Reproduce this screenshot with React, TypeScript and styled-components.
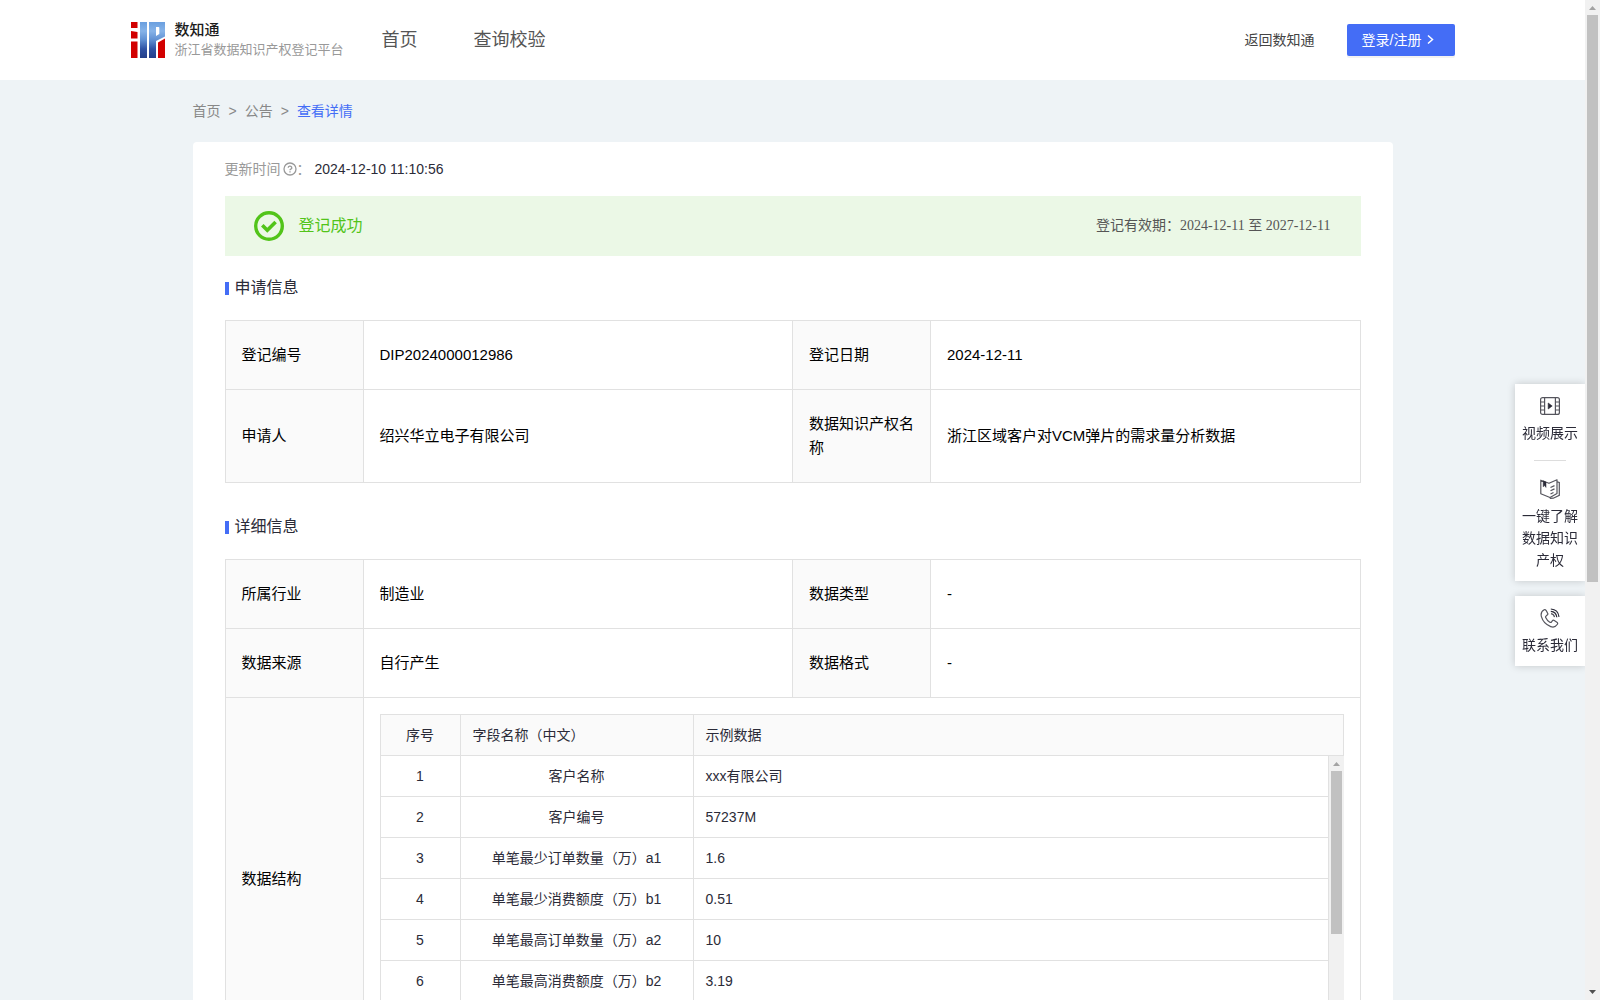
import React from "react";
import styled, { createGlobalStyle } from "styled-components";

const GlobalStyle = createGlobalStyle`
  *, *::before, *::after { box-sizing: border-box; }
  body {
    margin: 0;
    background: #eef3f6;
    color: #2b2b38;
    font-family: "Liberation Sans", "Noto Sans CJK SC", sans-serif;
    font-size: 14px;
    line-height: 22px;
  }
  a { color: inherit; text-decoration: none; }
  button { font-family: inherit; cursor: pointer; }
`;

const Shell = styled.div`
  display: flex;
  height: 100vh;
`;

const Page = styled.div`
  flex: 1;
  min-width: 0;
  overflow-y: auto;
  scrollbar-width: none;
`;

const ScrollRail = styled.div`
  position: relative;
  z-index: 2;
  display: flex;
  flex: none;
  flex-direction: column;
  width: 15px;
  background: #f1f1f1;
`;

const ScrollTrack = styled.div`
  flex: 1;
  padding: 0 2px;
`;

const ScrollThumb = styled.div<{ $size: number }>`
  height: ${(p) => p.$size}%;
  background: #c1c1c1;
`;

const ScrollArrow = styled.svg`
  display: block;
  flex: none;
`;

const Header = styled.header`
  background: #fff;
  padding: 0 32px;
`;

const HeaderInner = styled.div`
  display: flex;
  align-items: center;
  max-width: 1324px;
  height: 80px;
  margin: 0 auto;
`;

const Brand = styled.a`
  display: flex;
  align-items: center;
  gap: 10px;
`;

const BrandText = styled.span`
  display: flex;
  flex-direction: column;
`;

const BrandName = styled.strong`
  font-size: 15px;
  font-weight: 500;
  line-height: 20px;
  color: #1c1c1c;
`;

const BrandSub = styled.span`
  font-size: 13px;
  line-height: 20px;
  color: #999;
`;

const Nav = styled.nav`
  display: flex;
  gap: 56px;
  margin-left: 38px;
  font-size: 18px;
  line-height: 28px;
  color: #555;
`;

const HeaderActions = styled.div`
  display: flex;
  align-items: center;
  gap: 32px;
  margin-left: auto;
  color: #444;
`;

const LoginButton = styled.button`
  display: flex;
  align-items: center;
  gap: 4px;
  width: 108px;
  height: 32px;
  padding: 0 15px;
  border: 0;
  border-radius: 2px;
  background: #446df6;
  color: #fff;
  font-size: 14px;
  line-height: 22px;
  white-space: nowrap;
  box-shadow: 0 2px 0 rgba(0, 0, 0, 0.05);
`;

const Main = styled.main`
  max-width: 1200px;
  margin: 0 auto;
  padding: 20px 0 48px;
`;

const Breadcrumb = styled.nav`
  display: flex;
  gap: 8px;
  margin-bottom: 20px;
  color: #888;
`;

const Current = styled.a`
  color: #446df6;
`;

const Card = styled.section`
  padding: 16px 32px 48px;
  border-radius: 4px;
  background: #fff;
`;

const UpdateLine = styled.p`
  display: flex;
  align-items: center;
  margin: 0 0 16px;
  color: #999;
`;

const UpdateIcon = styled.svg`
  margin-left: 2px;
`;

const UpdateTime = styled.time`
  margin-left: 4px;
  color: #2b2b38;
`;

const Banner = styled.div`
  display: flex;
  align-items: center;
  justify-content: space-between;
  height: 60px;
  padding: 0 30px 0 28px;
  background: #ebf8e6;
`;

const BannerStatus = styled.div`
  display: flex;
  align-items: center;
  gap: 14px;
  font-size: 16px;
  line-height: 24px;
  color: #52c41a;
`;

const BannerPeriod = styled.div`
  font-family: "Liberation Serif", "Noto Sans CJK SC", serif;
  color: #555;
`;

const SectionTitle = styled.h2`
  display: flex;
  align-items: center;
  gap: 6px;
  margin: 20px 0;
  color: #2b2b38;
  font-size: 16px;
  font-weight: 400;
  line-height: 24px;

  &::before {
    content: "";
    width: 4px;
    height: 13px;
    background: #446df6;
  }
`;

const InfoTable = styled.table`
  width: 100%;
  margin-bottom: 32px;
  border-collapse: collapse;
  table-layout: fixed;
  color: #000;
  font-size: 15px;
  line-height: 24px;
  text-align: left;
`;

const LabelCol = styled.col`
  width: 138px;
`;

const Label = styled.th`
  padding: 22px 16px;
  border: 1px solid #e1e1e1;
  background: #fafafa;
  font-weight: 400;
`;

const Value = styled.td<{ $nested?: boolean }>`
  padding: ${(p) => (p.$nested ? "16px" : "22px 16px")};
  border: 1px solid #e1e1e1;
`;

const FieldTable = styled.table<{ $framed?: boolean }>`
  width: 100%;
  border: solid #e1e1e1;
  border-width: ${(p) => (p.$framed ? "1px 0 0 1px" : "0 0 0 1px")};
  border-collapse: separate;
  border-spacing: 0;
  table-layout: fixed;
  color: #2b2b38;
  font-size: 14px;
  line-height: 22px;
`;

const FieldCol = styled.col<{ $width?: number }>`
  width: ${(p) => (p.$width ? `${p.$width}px` : "auto")};
`;

const FieldHead = styled.th<{ $center?: boolean }>`
  height: 41px;
  padding: 0 12px;
  border: solid #e1e1e1;
  border-width: 0 1px 1px 0;
  background: #fafafa;
  font-weight: 400;
  text-align: ${(p) => (p.$center ? "center" : "left")};
`;

const FieldCell = styled.td<{ $center?: boolean }>`
  height: 41px;
  padding: 0 12px;
  border: solid #e1e1e1;
  border-width: 0 1px 1px 0;
  text-align: ${(p) => (p.$center ? "center" : "left")};
`;

const FieldBody = styled.div`
  display: flex;
  height: 287px;
`;

const FieldScroll = styled.div`
  flex: 1;
  min-width: 0;
  overflow-y: auto;
  scrollbar-width: none;
`;

const SideBar = styled.aside`
  position: fixed;
  top: 384px;
  right: 15px;
  display: flex;
  flex-direction: column;
  gap: 15px;
  width: 70px;
`;

const SideCard = styled.div`
  display: flex;
  flex-direction: column;
  align-items: center;
  background: #fff;
  box-shadow: 0 0 8px rgba(0, 0, 0, 0.18);
`;

const SideLink = styled.a`
  display: flex;
  flex-direction: column;
  align-items: center;
  gap: 6px;
  padding: 12px 7px 10px;
  text-align: center;
`;

const SideDivider = styled.hr`
  width: 32px;
  margin: 6px 0;
  border: 0;
  border-top: 1px solid #ddd;
`;

const LogoMark = () => (
  <svg width="34" height="36" viewBox="0 0 34 36" aria-hidden="true">
    <defs>
      <linearGradient id="blue" gradientUnits="userSpaceOnUse" x1="0" y1="0" x2="0" y2="36">
        <stop offset="0" stopColor="#6a9fdf" />
        <stop offset="0.25" stopColor="#86b3e8" />
        <stop offset="0.5" stopColor="#5f8fd2" />
        <stop offset="0.75" stopColor="#2f52a4" />
        <stop offset="1" stopColor="#243f8a" />
      </linearGradient>
    </defs>
    <path fill="#d20000" d="M0 0h6.500v6H0zM0 9l6.500 1v6.500H0zM0 19.500h6.500V36H0z" />
    <path fill="url(#blue)" d="M9 0h7v36H9z" />
    <path fill="url(#blue)" d="M18 0h16v14.500l-9 4.500V36h-7z" />
    <path fill="#fff" d="M25 5h2.500q.8 0 .8.8V12l-3.300 2z" />
    <path fill="#d20000" d="M27 20.500l7-4V36h-7z" />
  </svg>
);

const ChevronIcon = () => (
  <svg width="12" height="12" viewBox="0 0 12 12" fill="none" aria-hidden="true">
    <path d="M3 1.500L7.500 5.500L3 9.500" stroke="#fff" strokeWidth="1.500" />
  </svg>
);

const QuestionIcon = () => (
  <UpdateIcon width="14" height="14" viewBox="0 0 14 14" fill="none" stroke="#999" aria-hidden="true">
    <circle cx="7" cy="7" r="6" strokeWidth="1.300" />
    <path d="M5.200 5.700a1.800 1.600 0 1 1 2.600 1.400c-.6.3-.8.6-.8 1.100" strokeWidth="1.300" />
    <path d="M7 9.300v1.300" strokeWidth="1.300" />
  </UpdateIcon>
);

const CheckIcon = () => (
  <svg width="32" height="32" viewBox="0 0 32 32" fill="none" stroke="#52c41a" aria-hidden="true">
    <circle cx="16" cy="16" r="13.300" strokeWidth="3.400" />
    <path d="M9.300 15.300l5 5 8.300-8.300" strokeWidth="3.600" />
  </svg>
);

const VideoIcon = () => (
  <svg width="20" height="20" viewBox="0 0 20 20" fill="none" stroke="#55555d" strokeWidth="1.200" aria-hidden="true">
    <rect x="0.600" y="1.600" width="18.800" height="16.800" rx="2" />
    <path d="M4.600 1.600v16.800M15.400 1.600v16.800M.6 6h4M.6 10h4M.6 14h4M15.400 6h4M15.400 10h4M15.400 14h4" />
    <path d="M8.200 7v6l4-3z" fill="#2b2b38" stroke="#2b2b38" strokeWidth="0.600" />
  </svg>
);

const BookIcon = () => (
  <svg width="20" height="20" viewBox="0 0 20 20" fill="none" stroke="#55555d" strokeWidth="1.200" aria-hidden="true">
    <path d="M.8 1.200L9 4.300l8-3.500v13.700l-7 4-9.200-3.700z" strokeLinejoin="round" />
    <path d="M17 2.800l2.300.6v13l-6 2.800-3.500.2" />
    <path d="M3.200 1.800v6l1.400-1.200 1.400 1.800V3z" fill="#2b2b38" stroke="#2b2b38" strokeWidth="0.500" />
    <path d="M10.500 8.500l4-1.900M10.500 11.800l4-1.900M10.500 15l3-1.500" />
  </svg>
);

const PhoneIcon = () => (
  <svg width="20" height="20" viewBox="0 0 20 20" fill="none" stroke="#55555d" strokeWidth="1.200" aria-hidden="true">
    <path
      d="M4.200 1.800C1.500 3.300.6 5.700 1.400 8.700c1.300 4.600 4.800 8.200 9.300 9.900 2.500.9 5 .4 6.700-2.300.5-.9.200-1.600-.5-2.100l-2.600-1.700c-.8-.5-1.500-.3-2 .4l-.8 1.100c-.5.600-1 .6-1.700.2-2-1.200-3.200-2.700-4.100-4.700-.3-.7-.2-1.200.4-1.600l1.100-.8c.7-.5.9-1.200.4-2L6 2.300c-.5-.7-1.100-.9-1.800-.5z"
      strokeLinejoin="round"
    />
    <path d="M11 5.600c2 .3 3.200 1.600 3.500 3.500" />
    <path d="M10.800 3.300c3.400.3 5.600 2.500 6 5.900M10.800 1c4.600.3 7.700 3.400 8.200 7.900" stroke="#2b2b38" />
  </svg>
);

const ScrollBar = ({ size }: { size: number }) => (
  <ScrollRail aria-hidden="true">
    <ScrollArrow width="15" height="15" viewBox="0 0 15 15">
      <path d="M4 10L7.500 6L11 10z" fill="#a3a3a3" />
    </ScrollArrow>
    <ScrollTrack>
      <ScrollThumb $size={size} />
    </ScrollTrack>
    <ScrollArrow width="15" height="15" viewBox="0 0 15 15">
      <path d="M4 5L7.500 9L11 5z" fill="#505050" />
    </ScrollArrow>
  </ScrollRail>
);

const fields: [string, string][] = [
  ["客户名称", "xxx有限公司"],
  ["客户编号", "57237M"],
  ["单笔最少订单数量（万）a1", "1.6"],
  ["单笔最少消费额度（万）b1", "0.51"],
  ["单笔最高订单数量（万）a2", "10"],
  ["单笔最高消费额度（万）b2", "3.19"],
];

const FieldCols = () => (
  <colgroup>
    <FieldCol $width={80} />
    <FieldCol $width={233} />
    <FieldCol />
  </colgroup>
);

const InfoCols = () => (
  <colgroup>
    <LabelCol />
    <col />
    <LabelCol />
    <col />
  </colgroup>
);

const InfoRow = ({ items }: { items: [string, string][] }) => (
  <tr>
    {items.map(([label, value]) => (
      <React.Fragment key={label}>
        <Label scope="row">{label}</Label>
        <Value>{value}</Value>
      </React.Fragment>
    ))}
  </tr>
);

export default function App() {
  return (
    <Shell>
      <GlobalStyle />
      <Page>
        <Header>
          <HeaderInner>
            <Brand href="#">
              <LogoMark />
              <BrandText>
                <BrandName>数知通</BrandName>
                <BrandSub>浙江省数据知识产权登记平台</BrandSub>
              </BrandText>
            </Brand>
            <Nav>
              <a href="#">首页</a>
              <a href="#">查询校验</a>
            </Nav>
            <HeaderActions>
              <a href="#">返回数知通</a>
              <LoginButton type="button">
                登录/注册
                <ChevronIcon />
              </LoginButton>
            </HeaderActions>
          </HeaderInner>
        </Header>

        <Main>
          <Breadcrumb>
            <a href="#">首页</a>
            <span>&gt;</span>
            <a href="#">公告</a>
            <span>&gt;</span>
            <Current href="#">查看详情</Current>
          </Breadcrumb>

          <Card>
            <UpdateLine>
              更新时间
              <QuestionIcon />
              ：<UpdateTime>2024-12-10 11:10:56</UpdateTime>
            </UpdateLine>

            <Banner>
              <BannerStatus>
                <CheckIcon />
                登记成功
              </BannerStatus>
              <BannerPeriod>登记有效期：2024-12-11 至 2027-12-11</BannerPeriod>
            </Banner>

            <SectionTitle>申请信息</SectionTitle>
            <InfoTable>
              <InfoCols />
              <tbody>
                <InfoRow items={[["登记编号", "DIP2024000012986"], ["登记日期", "2024-12-11"]]} />
                <InfoRow
                  items={[["申请人", "绍兴华立电子有限公司"], ["数据知识产权名称", "浙江区域客户对VCM弹片的需求量分析数据"]]}
                />
              </tbody>
            </InfoTable>

            <SectionTitle>详细信息</SectionTitle>
            <InfoTable>
              <InfoCols />
              <tbody>
                <InfoRow items={[["所属行业", "制造业"], ["数据类型", "-"]]} />
                <InfoRow items={[["数据来源", "自行产生"], ["数据格式", "-"]]} />
                <tr>
                  <Label scope="row">数据结构</Label>
                  <Value colSpan={3} $nested>
                    <FieldTable $framed>
                      <FieldCols />
                      <thead>
                        <tr>
                          <FieldHead $center>序号</FieldHead>
                          <FieldHead>字段名称（中文）</FieldHead>
                          <FieldHead>示例数据</FieldHead>
                        </tr>
                      </thead>
                    </FieldTable>
                    <FieldBody>
                      <FieldScroll>
                        <FieldTable>
                          <FieldCols />
                          <tbody>
                            {fields.map(([name, sample], i) => (
                              <tr key={name}>
                                <FieldCell $center>{i + 1}</FieldCell>
                                <FieldCell $center>{name}</FieldCell>
                                <FieldCell>{sample}</FieldCell>
                              </tr>
                            ))}
                          </tbody>
                        </FieldTable>
                      </FieldScroll>
                      <ScrollBar size={63.5} />
                    </FieldBody>
                  </Value>
                </tr>
              </tbody>
            </InfoTable>
          </Card>
        </Main>

        <SideBar>
          <SideCard>
            <SideLink href="#">
              <VideoIcon />
              视频展示
            </SideLink>
            <SideDivider />
            <SideLink href="#">
              <BookIcon />
              一键了解数据知识产权
            </SideLink>
          </SideCard>
          <SideCard>
            <SideLink href="#">
              <PhoneIcon />
              联系我们
            </SideLink>
          </SideCard>
        </SideBar>
      </Page>
      <ScrollBar size={58.5} />
    </Shell>
  );
}
